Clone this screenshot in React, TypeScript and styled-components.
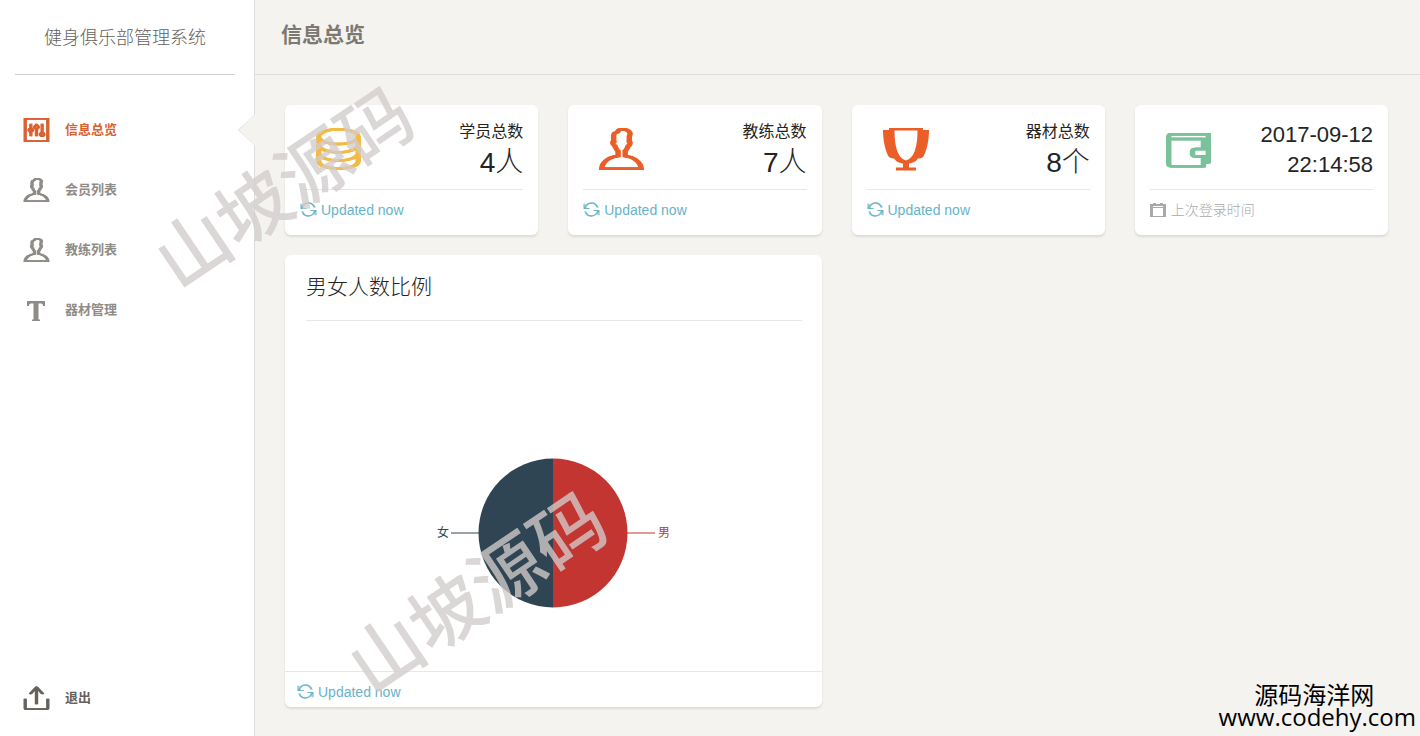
import React from "react";
import styled, { createGlobalStyle } from "styled-components";
import {
  TfiPanel,
  TfiUser,
  TfiExport,
  TfiServer,
  TfiWallet,
  TfiReload,
} from "react-icons/tfi";

const GlobalStyle = createGlobalStyle`
  *, *::before, *::after { box-sizing: border-box; }
  body {
    margin: 0;
    background: #f4f3ef;
    color: #252422;
    font-family: "Liberation Sans", "Noto Sans CJK SC", sans-serif;
    font-size: 14px;
  }
  h1, h2, p, ul { margin: 0; padding: 0; }
  svg { overflow: visible; }
`;

const Page = styled.div`
  position: relative;
  display: flex;
  min-height: 100vh;
  overflow: hidden;
`;

const Sidebar = styled.aside`
  display: flex;
  flex-direction: column;
  flex: 0 0 255px;
  background: #fff;
  border-right: 1px solid #dddddd;
`;

const Brand = styled.p`
  height: 75px;
  margin: 0 19px 0 15px;
  border-bottom: 1px solid #cfcfca;
  color: #66615b;
  font-size: 18px;
  font-weight: 300;
  line-height: 76px;
  text-align: center;
`;

const NavList = styled.ul`
  display: flex;
  flex-direction: column;
  flex: 1;
  padding: 25px 0 8px;
  list-style: none;
`;

const NavItem = styled.li<{ $last?: boolean }>`
  position: relative;
  margin-top: ${(p) => (p.$last ? "auto" : "0")};
`;

const NavLink = styled.a<{ $color: string }>`
  display: flex;
  align-items: center;
  gap: 17px;
  height: 60px;
  padding-left: 23px;
  color: ${(p) => p.$color};
  font-size: 13px;
  font-weight: 700;
  line-height: 18px;
  text-decoration: none;

  svg {
    width: 25px;
    height: 24px;
  }
  svg:not([data-solid]) {
    filter: drop-shadow(1px 0 0 currentColor) drop-shadow(1px 0 0 currentColor);
  }
`;

const ActiveArrow = styled.i`
  position: absolute;
  top: 14px;
  right: -1px;
  width: 17px;
  height: 32px;
  background: #dddddd;
  clip-path: polygon(100% 0, 0 50%, 100% 100%);

  &::after {
    content: "";
    position: absolute;
    inset: 0 0 0 1px;
    background: #f4f3ef;
    clip-path: polygon(100% 0, 0 50%, 100% 100%);
  }
`;

const Main = styled.main`
  flex: 1;
  min-width: 0;
`;

const Header = styled.header`
  height: 75px;
  padding-left: 26px;
  border-bottom: 1px solid #dddddd;
`;

const PageTitle = styled.h1`
  color: #7c7872;
  font-size: 21px;
  font-weight: 700;
  line-height: 70px;
`;

const Grid = styled.div`
  display: grid;
  grid-template-columns: repeat(4, minmax(0, 1fr));
  gap: 20px 30px;
  padding: 30px 32px 28px 30px;
`;

const Card = styled.section<{ $span?: number }>`
  grid-column: span ${(p) => p.$span ?? 1};
  background: #fff;
  border-radius: 6px;
  box-shadow: 0 2px 2px rgba(204, 197, 185, 0.5);
`;

const StatCard = styled(Card)`
  height: 130px;
  padding: 0 15px;
`;

const StatTop = styled.div`
  display: flex;
  align-items: center;
  justify-content: space-between;
  height: 85px;
  padding-left: 16px;
  border-bottom: 1px solid #e8e7e3;
`;

const StatIcon = styled.span<{ $color: string }>`
  display: flex;
  padding-top: 4px;
  color: ${(p) => p.$color};

  svg:not([data-solid]) {
    width: 42px;
    height: 44px;
    filter: drop-shadow(2px 0 0 currentColor) drop-shadow(1px 0 0 currentColor);
  }
`;

const StatText = styled.div`
  padding-top: 6px;
  text-align: right;
`;

const StatLabel = styled.p`
  font-size: 16px;
  line-height: 26px;
`;

const StatValue = styled.p`
  font-size: 28px;
  font-weight: 300;
  line-height: 36px;
`;

const StatTime = styled.p`
  font-size: 22px;
  line-height: 30px;
`;

const Status = styled.p<{ $color: string }>`
  display: flex;
  align-items: center;
  gap: 5px;
  height: 40px;
  color: ${(p) => p.$color};
  font-size: 14px;
  font-weight: 300;
  line-height: 20px;

  svg {
    width: 16px;
    height: 15px;
    margin-bottom: 2px;
  }
  svg:not([data-solid]) {
    filter: drop-shadow(1px 0 0 currentColor);
  }
`;

const ChartTitle = styled.h2`
  height: 66px;
  margin: 0 20px 0 21px;
  border-bottom: 1px solid #e8e7e3;
  font-size: 21px;
  font-weight: 300;
  line-height: 64px;
`;

const ChartBody = styled.div`
  display: flex;
  justify-content: center;
  padding: 132px 0 58px;
`;

const ChartFooter = styled.footer`
  height: 36px;
  padding: 0 12px;
  border-top: 1px solid #e8e7e3;
`;

const Stamp = styled.span<{ $left: number; $top: number }>`
  position: absolute;
  left: ${(p) => p.$left}px;
  top: ${(p) => p.$top}px;
  color: rgba(210, 204, 204, 0.78);
  font-size: 73px;
  font-weight: 500;
  line-height: 80px;
  white-space: nowrap;
  transform: rotate(-34deg);
  pointer-events: none;
`;

const SiteMark = styled.p`
  position: absolute;
  right: 4px;
  bottom: 8px;
  display: flex;
  flex-direction: column;
  color: #000;
  font-family: "Open Sans", "Noto Sans CJK SC", sans-serif;
  font-size: 24px;
  line-height: 22px;
  text-align: center;
`;

const SiteName = styled.span`
  padding-right: 6px;
`;

const TEAL = "#68b3c8";
const ORANGE = "#eb5e28";
const MUTED = "#8f8b86";

function SlabT() {
  return (
    <svg data-solid viewBox="0 0 25 24" fill="currentColor" aria-hidden="true">
      <path d="M4 3H22V8H20C20 6 19 5.500 17 5.500H15.500V21.500H17V23H9V21.500H10.500V5.500H9C7 5.500 6 6 6 8H4Z" />
    </svg>
  );
}

function Trophy() {
  return (
    <svg data-solid width="46" height="43" viewBox="0 0 46 43" fill="currentColor" fillRule="evenodd" aria-hidden="true">
      <path d="M0 2H6V0H40V2H46C46 14 43 25 40 29Q38 30.500 35 30.500C32 34.500 29 35 26 35.500V39.500H33V42.500H13V39.500H20V35.500C17 35 14 34.500 11 30.500Q8 30.500 6 29C3 25 0 14 0 2ZM11.500 2.500H34.500C34.500 19 31 30.500 23 32.500C15 30.500 11.500 19 11.500 2.500Z" />
    </svg>
  );
}

function Calendar() {
  return (
    <svg data-solid viewBox="0 0 16 15" fill="currentColor" fillRule="evenodd" aria-hidden="true">
      <path d="M0 2H3V1H6V2H10V1H13V2H16V15H0ZM3 4V5H13V4ZM3 6V14H13V6Z" />
    </svg>
  );
}

const NAV = [
  { label: "信息总览", Icon: TfiPanel, color: "#dc5f30", active: true },
  { label: "会员列表", Icon: TfiUser, color: MUTED },
  { label: "教练列表", Icon: TfiUser, color: MUTED },
  { label: "器材管理", Icon: SlabT, color: MUTED },
];

const STATS = [
  { label: "学员总数", value: "4人", Icon: TfiServer, color: "#f3bb45" },
  { label: "教练总数", value: "7人", Icon: TfiUser, color: ORANGE },
  { label: "器材总数", value: "8个", Icon: Trophy, color: ORANGE },
];

function RatioPie() {
  return (
    <svg width="240" height="160" viewBox="0 0 240 160" role="img" aria-label="男女人数比例">
      <path d="M120 5.500A74.500 74.500 0 0 1 120 154.500Z" fill="#c23531" />
      <path d="M120 5.500A74.500 74.500 0 0 0 120 154.500Z" fill="#2f4554" />
      <path d="M194 80H222" stroke="#c23531" />
      <path d="M46 80H18" stroke="#2f4554" />
      <text x="225" y="84" fontSize="12" fill="#c23531">男</text>
      <text x="16" y="84" fontSize="12" fill="#2f4554" textAnchor="end">女</text>
    </svg>
  );
}

export default function App() {
  return (
    <Page>
      <GlobalStyle />
      <Sidebar>
        <Brand>健身俱乐部管理系统</Brand>
        <NavList>
          {NAV.map(({ label, Icon, color, active }) => (
            <NavItem key={label}>
              <NavLink href="#" $color={color}>
                <Icon />
                <span>{label}</span>
              </NavLink>
              {active && <ActiveArrow />}
            </NavItem>
          ))}
          <NavItem $last>
            <NavLink href="#" $color="#66615b">
              <TfiExport />
              <span>退出</span>
            </NavLink>
          </NavItem>
        </NavList>
      </Sidebar>

      <Main>
        <Header>
          <PageTitle>信息总览</PageTitle>
        </Header>
        <Grid>
          {STATS.map(({ label, value, Icon, color }) => (
            <StatCard key={label}>
              <StatTop>
                <StatIcon $color={color}>
                  <Icon />
                </StatIcon>
                <StatText>
                  <StatLabel>{label}</StatLabel>
                  <StatValue>{value}</StatValue>
                </StatText>
              </StatTop>
              <Status $color={TEAL}>
                <TfiReload />
                Updated now
              </Status>
            </StatCard>
          ))}
          <StatCard>
            <StatTop>
              <StatIcon $color="#7ac29a">
                <TfiWallet />
              </StatIcon>
              <StatText>
                <StatTime>2017-09-12</StatTime>
                <StatTime>22:14:58</StatTime>
              </StatText>
            </StatTop>
            <Status $color="#a9a9a9">
              <Calendar />
              上次登录时间
            </Status>
          </StatCard>

          <Card $span={2}>
            <ChartTitle>男女人数比例</ChartTitle>
            <ChartBody>
              <RatioPie />
            </ChartBody>
            <ChartFooter>
              <Status $color={TEAL}>
                <TfiReload />
                Updated now
              </Status>
            </ChartFooter>
          </Card>
        </Grid>
      </Main>

      <Stamp $left={139} $top={149}>山坡源码</Stamp>
      <Stamp $left={332} $top={554}>山坡源码</Stamp>
      <SiteMark>
        <SiteName>源码海洋网</SiteName>
        <span>www.codehy.com</span>
      </SiteMark>
    </Page>
  );
}
